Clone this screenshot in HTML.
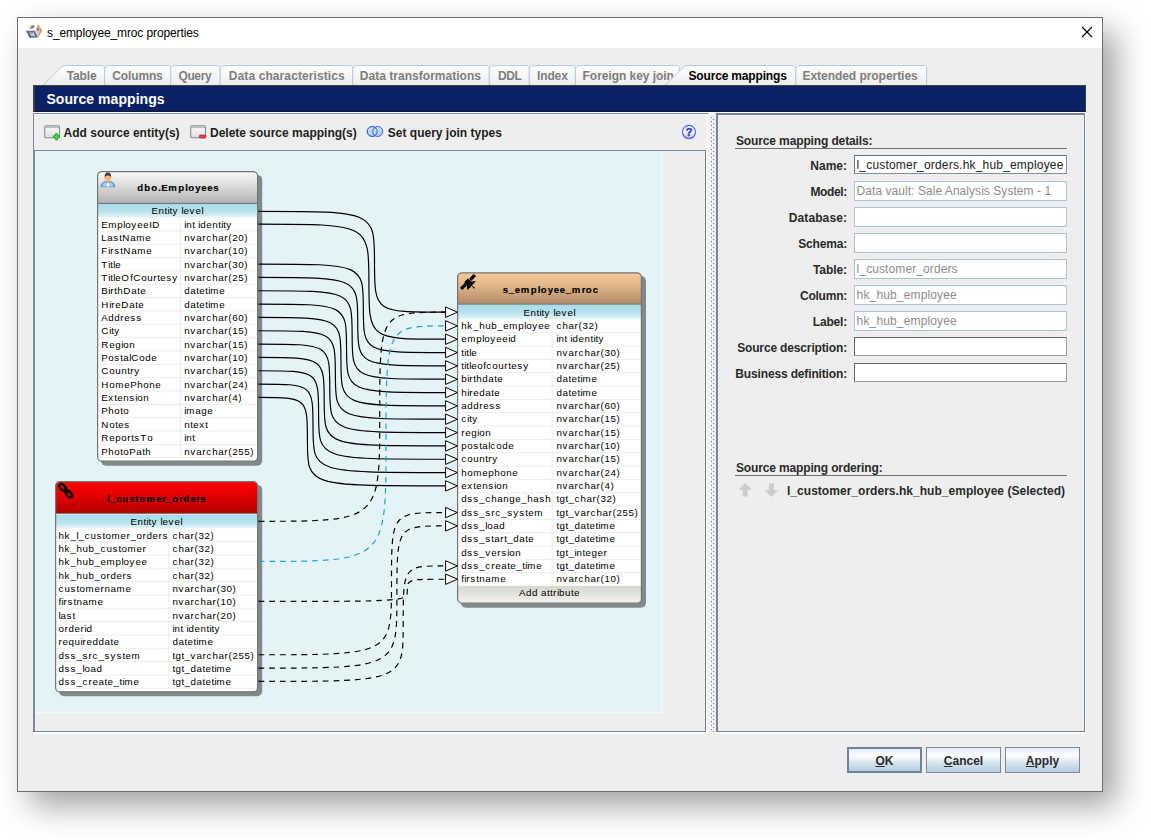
<!DOCTYPE html>
<html><head><meta charset="utf-8"><title>s_employee_mroc properties</title>
<style>
*{box-sizing:border-box;margin:0;padding:0}
html,body{width:1151px;height:840px;overflow:hidden;background:#fff}
body{font-family:"Liberation Sans",sans-serif;font-size:12px;color:#222;position:relative}
.abs{position:absolute}
#win{position:absolute;left:17px;top:17px;width:1086px;height:775px;border:1px solid #6f6f6f;background:#eeeeee;
 box-shadow:13px 14px 30px 0 rgba(0,0,0,.37)}
#titlebar{position:absolute;left:18px;top:18px;width:1084px;height:30px;background:#fff}
#title{position:absolute;left:47px;top:26px;font-size:12px;line-height:14px;color:#000;letter-spacing:-.12px;white-space:nowrap}
.tab{position:absolute;top:65px;height:21px;font-weight:bold;font-size:12px;line-height:14px;color:#7d7d7d;white-space:nowrap}
.tab span{position:absolute;top:4px}
#bluebar{position:absolute;left:33px;top:85px;width:1053px;height:27px;background:#0a2265;border-top:1.6px solid #44423f;border-bottom:1px solid #16182c;border-left:2px solid #3f3e3c;border-right:1px solid #3a3a44}
#bluebar span{position:absolute;left:11.4px;top:5.4px;font-size:14px;line-height:16px;font-weight:bold;color:#fff;letter-spacing:.05px;white-space:nowrap}
.tb{position:absolute;top:126px;font-weight:bold;font-size:12px;line-height:14px;color:#1e1e1e;white-space:nowrap}
.lbl{position:absolute;font-weight:bold;font-size:12px;line-height:14px;color:#2a2a2a;white-space:nowrap;text-align:right;width:120px;left:727px}
.inp{position:absolute;left:854px;width:213px;height:20px;background:#fff;border:1px solid #aac4e0;font-size:12px;line-height:14px;padding:2px 0 0 1.6px;color:#8c8c8c;white-space:nowrap;overflow:hidden}
.btn{position:absolute;top:747px;height:26px;border:1px solid #7b8a9b;background:linear-gradient(#e4ecf5 0%,#fdfeff 28%,#f4f8fb 40%,#d6e3f0 62%,#b7cde3 100%);font-weight:bold;font-size:12px;line-height:14px;text-align:center;padding-top:6px;color:#2b2b2b}
.btn u{text-decoration:underline}
</style></head><body>
<div id="win"></div>
<div id="titlebar"></div>
<svg class="abs" style="left:25px;top:23px" width="18" height="16" viewBox="0 0 18 16">
<defs><linearGradient id="dg" x1="0" y1="0" x2="1" y2="0"><stop offset="0" stop-color="#f6d9bd"/><stop offset="0.55" stop-color="#eaa56a"/><stop offset="1" stop-color="#dc7f37"/></linearGradient>
<linearGradient id="pg" x1="0" y1="0" x2="0" y2="1"><stop offset="0" stop-color="#5573b4"/><stop offset="1" stop-color="#3f5b9a"/></linearGradient></defs>
<path d="M0.9,7.7 L10,7.7 L12.8,14.6 L4.5,14.8 Z" fill="url(#pg)"/>
<path d="M4.2,9.4 L8.8,9.4 L10.4,13.2 L6,13.2 Z" fill="#bccbeb"/>
<path d="M4.4,9.2 L7.9,9.2 L6.3,12.1 Z" fill="#e58a3a"/>
<path d="M13,1 L17.3,7.6 L13,14.7 L9.7,7.5 Z" fill="url(#dg)"/>
<path d="M13,3.9 L15.2,7.6 L13,12 L11.2,7.5 Z" fill="#f4dcc6"/>
<path d="M13,4.2 L14.6,7.5 L11.5,7.5 Z" fill="#4a69aa"/>
<path d="M11.6,7.9 L14.5,7.9 L13.1,11.5 Z" fill="#b4c2e6"/>
<path d="M6.3,2.6 L10,2.6 L8.5,5 L5.2,5 Z" fill="#5573b4"/>
<path d="M3.9,5.9 L6.2,3.1 L7.7,5.9 Z" fill="#e58a3a"/>
</svg>
<div id="title">s_employee_mroc properties</div>
<svg class="abs" style="left:1080px;top:25px" width="14" height="14" viewBox="0 0 14 14"><path d="M2,2 L12,12 M12,2 L2,12" stroke="#000" stroke-width="1.1" fill="none"/></svg>
<svg class="abs" style="left:34px;top:60px" width="900" height="27" viewBox="0 0 900 27"><defs><linearGradient id="tg" x1="0" y1="0" x2="0" y2="1"><stop offset="0" stop-color="#ffffff"/><stop offset="0.25" stop-color="#fbfbfb"/><stop offset="1" stop-color="#ececec"/></linearGradient></defs>
<path fill="url(#tg)" stroke="#aecbe8" stroke-width="1" d="M8.60,25.60 L27.00,7.60 Q28.60,5.50 31.50,5.50 L68.40,5.50 Q70.60,5.90 70.60,8.70 L70.60,25.60"/>
<path fill="url(#tg)" stroke="#aecbe8" stroke-width="1" d="M70.60,25.60 L70.60,8.90 Q71.20,5.70 76.00,5.50 L134.60,5.50 Q136.80,5.90 136.80,8.70 L136.80,25.60"/>
<path fill="url(#tg)" stroke="#aecbe8" stroke-width="1" d="M136.80,25.60 L136.80,8.90 Q137.40,5.70 142.20,5.50 L184.00,5.50 Q186.20,5.90 186.20,8.70 L186.20,25.60"/>
<path fill="url(#tg)" stroke="#aecbe8" stroke-width="1" d="M186.20,25.60 L186.20,8.90 Q186.80,5.70 191.60,5.50 L316.50,5.50 Q318.70,5.90 318.70,8.70 L318.70,25.60"/>
<path fill="url(#tg)" stroke="#aecbe8" stroke-width="1" d="M318.70,25.60 L318.70,8.90 Q319.30,5.70 324.10,5.50 L453.10,5.50 Q455.30,5.90 455.30,8.70 L455.30,25.60"/>
<path fill="url(#tg)" stroke="#aecbe8" stroke-width="1" d="M455.30,25.60 L455.30,8.90 Q455.90,5.70 460.70,5.50 L493.10,5.50 Q495.30,5.90 495.30,8.70 L495.30,25.60"/>
<path fill="url(#tg)" stroke="#aecbe8" stroke-width="1" d="M495.30,25.60 L495.30,8.90 Q495.90,5.70 500.70,5.50 L539.20,5.50 Q541.40,5.90 541.40,8.70 L541.40,25.60"/>
<path fill="url(#tg)" stroke="#aecbe8" stroke-width="1" d="M541.40,25.60 L541.40,8.90 Q542.00,5.70 546.80,5.50 L643.40,5.50 Q645.60,5.90 645.60,8.70 L645.60,25.60"/>
<path fill="url(#tg)" stroke="#aecbe8" stroke-width="1" d="M761.70,25.60 L761.70,8.90 Q762.30,5.70 767.10,5.50 L890.40,5.50 Q892.60,5.90 892.60,8.70 L892.60,25.60"/>
<g font-family="Liberation Sans, sans-serif" font-weight="bold" font-size="12px" fill="#7e7e7e">
<text x="32.70" y="19.50" style="letter-spacing:-0.138px">Table</text>
<text x="78.30" y="19.50" style="letter-spacing:-0.139px">Columns</text>
<text x="144.40" y="19.50" style="letter-spacing:-0.345px">Query</text>
<text x="194.80" y="19.50" style="letter-spacing:0.097px">Data characteristics</text>
<text x="325.80" y="19.50" style="letter-spacing:0.027px">Data transformations</text>
<text x="463.90" y="19.50" style="letter-spacing:-0.33px">DDL</text>
<text x="503.00" y="19.50" style="letter-spacing:-0.135px">Index</text>
<text x="548.60" y="19.50" style="letter-spacing:-0.05px">Foreign key join</text>
<text x="768.50" y="19.50" style="letter-spacing:-0.046px">Extended properties</text>
</g>
<path fill="url(#tg)" stroke="#aecbe8" stroke-width="1" d="M630.60,25.60 L649.00,7.60 Q650.60,5.50 653.50,5.50 L759.50,5.50 Q761.70,5.90 761.70,8.70 L761.70,25.60"/>
<text x="654.50" y="19.50" font-family="Liberation Sans, sans-serif" font-weight="bold" font-size="12px" fill="#000" style="letter-spacing:-0.17px">Source mappings</text>
</svg>
<div id="bluebar"><span>Source mappings</span></div>
<!-- left panel frame -->
<div class="abs" style="left:33px;top:112px;width:1053px;height:1px;background:#fdfdfd"></div>
<div class="abs" style="left:33px;top:113px;width:675px;height:1px;background:#7a8b9f"></div>
<div class="abs" style="left:33px;top:113px;width:1px;height:619px;background:#7a8b9f"></div>
<div class="abs" style="left:34px;top:114px;width:672px;height:1px;background:#f6f6f6"></div>
<div class="abs" style="left:34px;top:150px;width:672px;height:1px;background:#7a8b9f"></div>
<div class="abs" style="left:34px;top:151px;width:1px;height:581px;background:#7a8b9f"></div>
<div class="abs" style="left:705px;top:151px;width:1px;height:581px;background:#72849b"></div>
<div class="abs" style="left:706px;top:114px;width:2px;height:620px;background:#fafafa"></div>
<div class="abs" style="left:33px;top:731px;width:673px;height:1px;background:#72849b"></div>
<div class="abs" style="left:33px;top:732px;width:675px;height:1.5px;background:#fcfcfc"></div>
<!-- toolbar -->
<svg class="abs" style="left:43px;top:124px" width="20" height="17" viewBox="0 0 20 17">
<defs><linearGradient id="wg" x1="0" y1="0" x2="0" y2="1"><stop offset="0" stop-color="#ffffff"/><stop offset="1" stop-color="#dcdcdc"/></linearGradient></defs>
<rect x="1.7" y="1.7" width="14.8" height="12" rx="1.3" fill="url(#wg)" stroke="#8c8c8c" stroke-width="1.1"/>
<rect x="2.3" y="2.2" width="13.6" height="1.9" fill="#b9bcc6"/>
<path d="M13.5,10.4 V15 M11.2,12.7 H15.8" stroke="#1d9a1d" stroke-width="2.9" stroke-linecap="round"/>
<path d="M13.5,10.5 V14.9 M11.3,12.7 H15.7" stroke="#3fe03f" stroke-width="1.5" stroke-linecap="round"/>
</svg>
<div class="tb" style="left:63.6px">Add source entity(s)</div>
<svg class="abs" style="left:189px;top:124px" width="20" height="17" viewBox="0 0 20 17">
<rect x="1.7" y="1.7" width="14.8" height="12" rx="1.3" fill="url(#wg)" stroke="#8c8c8c" stroke-width="1.1"/>
<rect x="2.3" y="2.2" width="13.6" height="1.9" fill="#b9bcc6"/>
<rect x="10.3" y="11.1" width="6.6" height="2.9" rx="0.9" fill="#e8404a" stroke="#b81822" stroke-width="0.7"/>
</svg>
<div class="tb" style="left:210px">Delete source mapping(s)</div>
<svg class="abs" style="left:365px;top:124px" width="20" height="16" viewBox="0 0 20 16">
<defs><linearGradient id="vg" x1="0" y1="0" x2="1" y2="1"><stop offset="0" stop-color="#dfe9fa"/><stop offset="1" stop-color="#9db9ea"/></linearGradient></defs>
<circle cx="7.2" cy="7.5" r="5" fill="url(#vg)" stroke="#3a69d8" stroke-width="1"/>
<circle cx="12.8" cy="7.5" r="5" fill="url(#vg)" fill-opacity="0.85" stroke="#3a69d8" stroke-width="1"/>
<circle cx="7.2" cy="7.5" r="5" fill="none" stroke="#3a69d8" stroke-width="1"/>
</svg>
<div class="tb" style="left:387.8px">Set query join types</div>
<svg class="abs" style="left:680px;top:123px" width="18" height="18" viewBox="0 0 18 18">
<defs><linearGradient id="hg" x1="0" y1="0" x2="0" y2="1"><stop offset="0" stop-color="#ffffff"/><stop offset="0.5" stop-color="#f4f4f4"/><stop offset="1" stop-color="#d2d2d2"/></linearGradient></defs>
<ellipse cx="9" cy="15.4" rx="5.2" ry="1.2" fill="#cfcfcf"/>
<circle cx="9" cy="8.9" r="6.5" fill="url(#hg)" stroke="#3f5ff0" stroke-width="1.1"/>
<text x="9" y="12.9" text-anchor="middle" font-family="Liberation Sans, sans-serif" font-weight="bold" font-size="11.5px" fill="#2a40d4" stroke="#2a40d4" stroke-width=".35">?</text>
</svg>
<!-- splitter dots -->
<svg class="abs" style="left:708px;top:114px" width="8" height="620" viewBox="0 0 8 620">
<defs><pattern id="dots" x="0" y="0" width="8" height="4" patternUnits="userSpaceOnUse">
<rect x="2.9" y="3" width="1.1" height="1.1" fill="#6f8096"/><rect x="5" y="1" width="1.1" height="1.1" fill="#6f8096"/>
</pattern></defs>
<rect x="0" y="0" width="8" height="620" fill="#f1f1f1"/>
<rect x="0" y="2" width="8" height="616" fill="url(#dots)"/>
</svg>

<svg id="cv" width="672" height="581" viewBox="0 0 672 581" style="position:absolute;left:35px;top:151px;overflow:hidden">
<defs>
<linearGradient id="gEmp" x1="0" y1="0" x2="0" y2="1"><stop offset="0" stop-color="#fdfdfd"/><stop offset="0.35" stop-color="#e3e3e3"/><stop offset="1" stop-color="#b2b2b2"/></linearGradient>
<linearGradient id="gLco" x1="0" y1="0" x2="0" y2="1"><stop offset="0" stop-color="#ff0303"/><stop offset="0.4" stop-color="#e80000"/><stop offset="1" stop-color="#ae0000"/></linearGradient>
<linearGradient id="gSem" x1="0" y1="0" x2="0" y2="1"><stop offset="0" stop-color="#f9c998"/><stop offset="0.4" stop-color="#e2b78b"/><stop offset="1" stop-color="#ae8a67"/></linearGradient>
<linearGradient id="entlvl" x1="0" y1="0" x2="0" y2="1"><stop offset="0" stop-color="#a5dcea"/><stop offset="0.55" stop-color="#b9e3ee"/><stop offset="1" stop-color="#e6f5f9"/></linearGradient>
<linearGradient id="addattr" x1="0" y1="0" x2="0" y2="1"><stop offset="0" stop-color="#d6d6d0"/><stop offset="0.5" stop-color="#e6e6e1"/><stop offset="1" stop-color="#f6f6f3"/></linearGradient>
</defs>
<style>
#cv text{font-family:"Liberation Sans",sans-serif;font-size:9.8px;fill:#000;stroke:#000;stroke-width:.03px}
#cv .ttl{font-weight:bold;font-size:9.6px;stroke-width:.15px}
.ln{fill:none;stroke:#000;stroke-width:1.18}
.dl{fill:none;stroke:#000;stroke-width:1.18;stroke-dasharray:5.8 4.9}
.bl{fill:none;stroke:#1ea4cf;stroke-width:1.18;stroke-dasharray:5.8 4.9}
.ar{fill:#fff;stroke:#000;stroke-width:1.0;stroke-linejoin:miter}
</style>
<rect x="0" y="0" width="627.4" height="562.2" fill="#f7fbfc"/>
<rect x="0" y="0" width="626.5" height="561.3" fill="#e4f3f8"/>
<rect x="66.00" y="23.90" width="161.20" height="290.73" rx="5" ry="5" fill="#81898b"/>
<clipPath id="cg97"><rect x="62.60" y="20.60" width="160.00" height="289.53" rx="4.2" ry="4.2"/></clipPath>
<rect x="62.60" y="20.60" width="160.00" height="289.53" rx="4.4" ry="4.4" fill="#fff"/>
<g clip-path="url(#cg97)">
<rect x="62.00" y="20.00" width="161.20" height="32.60" fill="url(#gEmp)"/>
<rect x="62.00" y="51.90" width="161.20" height="1.1" fill="#767676"/>
<rect x="62.00" y="53.00" width="161.20" height="13.60" fill="url(#entlvl)"/>
<rect x="62.00" y="79.44" width="161.20" height="1" fill="#ededed"/>
<rect x="62.00" y="92.77" width="161.20" height="1" fill="#ededed"/>
<rect x="62.00" y="106.11" width="161.20" height="1" fill="#ededed"/>
<rect x="62.00" y="119.44" width="161.20" height="1" fill="#ededed"/>
<rect x="62.00" y="132.77" width="161.20" height="1" fill="#ededed"/>
<rect x="62.00" y="146.11" width="161.20" height="1" fill="#ededed"/>
<rect x="62.00" y="159.44" width="161.20" height="1" fill="#ededed"/>
<rect x="62.00" y="172.78" width="161.20" height="1" fill="#ededed"/>
<rect x="62.00" y="186.12" width="161.20" height="1" fill="#ededed"/>
<rect x="62.00" y="199.45" width="161.20" height="1" fill="#ededed"/>
<rect x="62.00" y="212.78" width="161.20" height="1" fill="#ededed"/>
<rect x="62.00" y="226.12" width="161.20" height="1" fill="#ededed"/>
<rect x="62.00" y="239.46" width="161.20" height="1" fill="#ededed"/>
<rect x="62.00" y="252.79" width="161.20" height="1" fill="#ededed"/>
<rect x="62.00" y="266.12" width="161.20" height="1" fill="#ededed"/>
<rect x="62.00" y="279.46" width="161.20" height="1" fill="#ededed"/>
<rect x="62.00" y="292.80" width="161.20" height="1" fill="#ededed"/>
<rect x="62.00" y="306.13" width="161.20" height="1" fill="#ededed"/>
<rect x="145.00" y="66.60" width="1" height="240.03" fill="#ededed"/>
</g>
<rect x="62.60" y="20.60" width="160.00" height="289.53" rx="4.4" ry="4.4" fill="none" stroke="#747474" stroke-width="1.2"/>
<g transform="translate(65.60,21.30)">
<path d="M0.3,14.6 C0.3,11.2 2.6,9.6 5.2,9 L7.3,11 L9.4,9 C12,9.6 14.3,11.2 14.3,14.6 Z" fill="#6aa6de" stroke="#4a86c4" stroke-width="0.6"/>
<path d="M2,14.2 C2,12 3.4,10.6 5.1,10 L6.6,12.6 L6.2,14.2 Z" fill="#a9d0f3"/>
<path d="M12.6,14.2 C12.6,12 11.2,10.6 9.5,10 L8,12.6 L8.4,14.2 Z" fill="#a9d0f3"/>
<path d="M6.2,10.6 L8.4,10.6 L8.1,14.4 L6.5,14.4 Z" fill="#ffffff"/>
<ellipse cx="7.3" cy="5.5" rx="2.9" ry="3.7" fill="#f2b878"/><ellipse cx="4.5" cy="5.7" rx="0.7" ry="1" fill="#e8a868"/><ellipse cx="10.1" cy="5.7" rx="0.7" ry="1" fill="#e8a868"/>
<path d="M5.6,8.6 L9,8.6 L8.6,10.4 L7.3,11.2 L6,10.4 Z" fill="#e8a868"/>
<path d="M4.2,5.2 C3.6,1.8 5.2,0.1 7.3,0.1 C9.4,0.1 11,1.8 10.4,5.2 C10,3.8 9.2,3.1 7.3,3.1 C5.4,3.1 4.6,3.8 4.2,5.2 Z" fill="#4a3a38"/>
</g>
<text x="102.2 109.2 116.2 123.2 126.2 133.2 143.2 150.2 153.2 160.2 166.2 172.2 178.2" y="39.80" class="ttl" fill="#111">dbo.Employees</text>
<text x="116.6 123.6 129.6 132.6 134.6 137.6 143.6 146.6 148.6 154.6 160.6 166.6" y="63.00" class="rt">Entity level</text>
<text x="66.3 73.3 82.3 88.3 90.3 96.3 102.3 108.3 114.3 117.3" y="76.80" class="rn">EmployeeID</text>
<text x="149.3 151.3 157.3 160.3 163.3 165.3 171.3 177.3 183.3 186.3 188.3 191.3" y="76.80" class="rt">int identity</text>
<text x="66.3 72.3 78.3 84.3 87.3 95.3 101.3 110.3" y="90.13" class="rn">LastName</text>
<text x="149.3 155.3 161.3 167.3 171.3 177.3 183.3 189.3 193.3 197.3 203.3 209.3" y="90.13" class="rt">nvarchar(20)</text>
<text x="66.3 73.3 75.3 79.3 85.3 88.3 96.3 102.3 111.3" y="103.47" class="rn">FirstName</text>
<text x="149.3 155.3 161.3 167.3 171.3 177.3 183.3 189.3 193.3 197.3 203.3 209.3" y="103.47" class="rt">nvarchar(10)</text>
<text x="66.3 73.3 75.3 78.3 80.3" y="116.81" class="rn">Title</text>
<text x="149.3 155.3 161.3 167.3 171.3 177.3 183.3 189.3 193.3 197.3 203.3 209.3" y="116.81" class="rt">nvarchar(30)</text>
<text x="66.3 73.3 75.3 78.3 80.3 86.3 95.3 98.3 106.3 112.3 118.3 122.3 125.3 131.3 137.3" y="130.14" class="rn">TitleOfCourtesy</text>
<text x="149.3 155.3 161.3 167.3 171.3 177.3 183.3 189.3 193.3 197.3 203.3 209.3" y="130.14" class="rt">nvarchar(25)</text>
<text x="66.3 73.3 75.3 79.3 82.3 88.3 96.3 102.3 105.3" y="143.47" class="rn">BirthDate</text>
<text x="149.3 155.3 161.3 164.3 170.3 173.3 175.3 184.3" y="143.47" class="rt">datetime</text>
<text x="66.3 74.3 76.3 80.3 86.3 94.3 100.3 103.3" y="156.81" class="rn">HireDate</text>
<text x="149.3 155.3 161.3 164.3 170.3 173.3 175.3 184.3" y="156.81" class="rt">datetime</text>
<text x="66.3 73.3 79.3 85.3 89.3 95.3 101.3" y="170.14" class="rn">Address</text>
<text x="149.3 155.3 161.3 167.3 171.3 177.3 183.3 189.3 193.3 197.3 203.3 209.3" y="170.14" class="rt">nvarchar(60)</text>
<text x="66.3 74.3 76.3 79.3" y="183.48" class="rn">City</text>
<text x="149.3 155.3 161.3 167.3 171.3 177.3 183.3 189.3 193.3 197.3 203.3 209.3" y="183.48" class="rt">nvarchar(15)</text>
<text x="66.3 74.3 80.3 86.3 88.3 94.3" y="196.81" class="rn">Region</text>
<text x="149.3 155.3 161.3 167.3 171.3 177.3 183.3 189.3 193.3 197.3 203.3 209.3" y="196.81" class="rt">nvarchar(15)</text>
<text x="66.3 73.3 79.3 85.3 88.3 94.3 96.3 104.3 110.3 116.3" y="210.15" class="rn">PostalCode</text>
<text x="149.3 155.3 161.3 167.3 171.3 177.3 183.3 189.3 193.3 197.3 203.3 209.3" y="210.15" class="rt">nvarchar(10)</text>
<text x="66.3 74.3 80.3 86.3 92.3 95.3 99.3" y="223.48" class="rn">Country</text>
<text x="149.3 155.3 161.3 167.3 171.3 177.3 183.3 189.3 193.3 197.3 203.3 209.3" y="223.48" class="rt">nvarchar(15)</text>
<text x="66.3 74.3 80.3 89.3 95.3 102.3 108.3 114.3 120.3" y="236.82" class="rn">HomePhone</text>
<text x="149.3 155.3 161.3 167.3 171.3 177.3 183.3 189.3 193.3 197.3 203.3 209.3" y="236.82" class="rt">nvarchar(24)</text>
<text x="66.3 73.3 79.3 82.3 88.3 94.3 100.3 102.3 108.3" y="250.16" class="rn">Extension</text>
<text x="149.3 155.3 161.3 167.3 171.3 177.3 183.3 189.3 193.3 197.3 203.3" y="250.16" class="rt">nvarchar(4)</text>
<text x="66.3 73.3 79.3 85.3 88.3" y="263.49" class="rn">Photo</text>
<text x="149.3 151.3 160.3 166.3 172.3" y="263.49" class="rt">image</text>
<text x="66.3 74.3 80.3 83.3 89.3" y="276.82" class="rn">Notes</text>
<text x="149.3 155.3 158.3 164.3 170.3" y="276.82" class="rt">ntext</text>
<text x="66.3 74.3 80.3 86.3 92.3 96.3 99.3 105.3 112.3" y="290.16" class="rn">ReportsTo</text>
<text x="149.3 151.3 157.3" y="290.16" class="rt">int</text>
<text x="66.3 73.3 79.3 85.3 88.3 94.3 101.3 107.3 110.3" y="303.50" class="rn">PhotoPath</text>
<text x="149.3 155.3 161.3 167.3 171.3 177.3 183.3 189.3 193.3 197.3 203.3 209.3 215.3" y="303.50" class="rt">nvarchar(255)</text>
<rect x="24.00" y="333.90" width="203.20" height="211.42" rx="5" ry="5" fill="#81898b"/>
<clipPath id="cg55"><rect x="20.60" y="330.60" width="202.00" height="210.22" rx="4.2" ry="4.2"/></clipPath>
<rect x="20.60" y="330.60" width="202.00" height="210.22" rx="4.4" ry="4.4" fill="#fff"/>
<g clip-path="url(#cg55)">
<rect x="20.00" y="330.00" width="203.20" height="32.80" fill="url(#gLco)"/>
<rect x="20.00" y="362.10" width="203.20" height="1.1" fill="#767676"/>
<rect x="20.00" y="364.00" width="203.20" height="13.30" fill="url(#entlvl)"/>
<rect x="20.00" y="390.13" width="203.20" height="1" fill="#ededed"/>
<rect x="20.00" y="403.47" width="203.20" height="1" fill="#ededed"/>
<rect x="20.00" y="416.80" width="203.20" height="1" fill="#ededed"/>
<rect x="20.00" y="430.14" width="203.20" height="1" fill="#ededed"/>
<rect x="20.00" y="443.47" width="203.20" height="1" fill="#ededed"/>
<rect x="20.00" y="456.81" width="203.20" height="1" fill="#ededed"/>
<rect x="20.00" y="470.14" width="203.20" height="1" fill="#ededed"/>
<rect x="20.00" y="483.48" width="203.20" height="1" fill="#ededed"/>
<rect x="20.00" y="496.81" width="203.20" height="1" fill="#ededed"/>
<rect x="20.00" y="510.15" width="203.20" height="1" fill="#ededed"/>
<rect x="20.00" y="523.48" width="203.20" height="1" fill="#ededed"/>
<rect x="20.00" y="536.82" width="203.20" height="1" fill="#ededed"/>
<rect x="132.80" y="377.30" width="1" height="160.02" fill="#ededed"/>
</g>
<rect x="20.60" y="330.60" width="202.00" height="210.22" rx="4.4" ry="4.4" fill="none" stroke="#747474" stroke-width="1.2"/>
<g transform="translate(23.20,332.00)" fill="none" stroke="#000" stroke-width="2.35" stroke-linecap="round">
<g transform="rotate(45 4.4 4.4)"><rect x="0.55" y="2.3" width="7.7" height="4.2" rx="2.1"/></g>
<g transform="rotate(45 10.8 11.0)"><rect x="6.95" y="8.9" width="7.7" height="4.2" rx="2.1"/></g>
<path d="M6.3,6.5 L9,9.1" stroke-width="2.3"/>
</g>
<text x="72.3 75.3 81.3 87.3 94.3 100.3 104.3 111.3 121.3 127.3 131.3 137.3 144.3 148.3 155.3 161.3 165.3" y="351.00" class="ttl" fill="#2a0000">l_customer_orders</text>
<text x="95.6 102.6 108.6 111.6 113.6 116.6 122.6 125.6 127.6 133.6 139.6 145.6" y="373.70" class="rt">Entity level</text>
<text x="23.6 29.6 35.6 41.6 43.6 49.6 55.6 61.6 67.6 70.6 76.6 85.6 91.6 95.6 101.6 107.6 111.6 117.6 123.6 127.6" y="387.50" class="rn">hk_l_customer_orders</text>
<text x="137.4 143.4 149.4 155.4 159.4 163.4 169.4 175.4" y="387.50" class="rt">char(32)</text>
<text x="23.6 29.6 35.6 41.6 47.6 53.6 59.6 65.6 71.6 77.6 83.6 86.6 92.6 101.6 107.6" y="400.84" class="rn">hk_hub_customer</text>
<text x="137.4 143.4 149.4 155.4 159.4 163.4 169.4 175.4" y="400.84" class="rt">char(32)</text>
<text x="23.6 29.6 35.6 41.6 47.6 53.6 59.6 65.6 71.6 80.6 86.6 88.6 94.6 100.6 106.6" y="414.17" class="rn">hk_hub_employee</text>
<text x="137.4 143.4 149.4 155.4 159.4 163.4 169.4 175.4" y="414.17" class="rt">char(32)</text>
<text x="23.6 29.6 35.6 41.6 47.6 53.6 59.6 65.6 71.6 75.6 81.6 87.6 91.6" y="427.50" class="rn">hk_hub_orders</text>
<text x="137.4 143.4 149.4 155.4 159.4 163.4 169.4 175.4" y="427.50" class="rt">char(32)</text>
<text x="23.6 29.6 35.6 41.6 44.6 50.6 59.6 65.6 69.6 75.6 81.6 90.6" y="440.84" class="rn">customername</text>
<text x="137.4 143.4 149.4 155.4 159.4 165.4 171.4 177.4 181.4 185.4 191.4 197.4" y="440.84" class="rt">nvarchar(30)</text>
<text x="23.6 26.6 28.6 32.6 38.6 41.6 47.6 53.6 62.6" y="454.17" class="rn">firstname</text>
<text x="137.4 143.4 149.4 155.4 159.4 165.4 171.4 177.4 181.4 185.4 191.4 197.4" y="454.17" class="rt">nvarchar(10)</text>
<text x="23.6 25.6 31.6 37.6" y="467.51" class="rn">last</text>
<text x="137.4 143.4 149.4 155.4 159.4 165.4 171.4 177.4 181.4 185.4 191.4 197.4" y="467.51" class="rt">nvarchar(20)</text>
<text x="23.6 29.6 33.6 39.6 45.6 49.6 51.6" y="480.85" class="rn">orderid</text>
<text x="137.4 139.4 145.4 148.4 151.4 153.4 159.4 165.4 171.4 174.4 176.4 179.4" y="480.85" class="rt">int identity</text>
<text x="23.6 27.6 33.6 39.6 45.6 47.6 51.6 57.6 63.6 69.6 75.6 78.6" y="494.18" class="rn">requireddate</text>
<text x="137.4 143.4 149.4 152.4 158.4 161.4 163.4 172.4" y="494.18" class="rt">datetime</text>
<text x="23.6 29.6 35.6 41.6 47.6 53.6 57.6 63.6 69.6 75.6 81.6 87.6 90.6 96.6" y="507.51" class="rn">dss_src_system</text>
<text x="137.4 140.4 146.4 149.4 155.4 161.4 167.4 171.4 177.4 183.4 189.4 193.4 197.4 203.4 209.4 215.4" y="507.51" class="rt">tgt_varchar(255)</text>
<text x="23.6 29.6 35.6 41.6 47.6 49.6 55.6 61.6" y="520.85" class="rn">dss_load</text>
<text x="137.4 140.4 146.4 149.4 155.4 161.4 167.4 170.4 176.4 179.4 181.4 190.4" y="520.85" class="rt">tgt_datetime</text>
<text x="23.6 29.6 35.6 41.6 47.6 53.6 57.6 63.6 69.6 72.6 78.6 84.6 87.6 89.6 98.6" y="534.18" class="rn">dss_create_time</text>
<text x="137.4 140.4 146.4 149.4 155.4 161.4 167.4 170.4 176.4 179.4 181.4 190.4" y="534.18" class="rt">tgt_datetime</text>
<rect x="426.00" y="125.10" width="185.00" height="331.60" rx="5" ry="5" fill="#81898b"/>
<clipPath id="cg457"><rect x="422.60" y="121.80" width="183.80" height="330.40" rx="4.2" ry="4.2"/></clipPath>
<rect x="422.60" y="121.80" width="183.80" height="330.40" rx="4.4" ry="4.4" fill="#fff"/>
<g clip-path="url(#cg457)">
<rect x="422.00" y="121.20" width="185.00" height="32.20" fill="url(#gSem)"/>
<rect x="422.00" y="152.70" width="185.00" height="1.1" fill="#767676"/>
<rect x="422.00" y="153.80" width="185.00" height="14.60" fill="url(#entlvl)"/>
<rect x="422.00" y="181.23" width="185.00" height="1" fill="#ededed"/>
<rect x="422.00" y="194.57" width="185.00" height="1" fill="#ededed"/>
<rect x="422.00" y="207.90" width="185.00" height="1" fill="#ededed"/>
<rect x="422.00" y="221.24" width="185.00" height="1" fill="#ededed"/>
<rect x="422.00" y="234.57" width="185.00" height="1" fill="#ededed"/>
<rect x="422.00" y="247.91" width="185.00" height="1" fill="#ededed"/>
<rect x="422.00" y="261.25" width="185.00" height="1" fill="#ededed"/>
<rect x="422.00" y="274.58" width="185.00" height="1" fill="#ededed"/>
<rect x="422.00" y="287.91" width="185.00" height="1" fill="#ededed"/>
<rect x="422.00" y="301.25" width="185.00" height="1" fill="#ededed"/>
<rect x="422.00" y="314.58" width="185.00" height="1" fill="#ededed"/>
<rect x="422.00" y="327.92" width="185.00" height="1" fill="#ededed"/>
<rect x="422.00" y="341.25" width="185.00" height="1" fill="#ededed"/>
<rect x="422.00" y="354.59" width="185.00" height="1" fill="#ededed"/>
<rect x="422.00" y="367.92" width="185.00" height="1" fill="#ededed"/>
<rect x="422.00" y="381.26" width="185.00" height="1" fill="#ededed"/>
<rect x="422.00" y="394.60" width="185.00" height="1" fill="#ededed"/>
<rect x="422.00" y="407.93" width="185.00" height="1" fill="#ededed"/>
<rect x="422.00" y="421.26" width="185.00" height="1" fill="#ededed"/>
<rect x="422.00" y="434.60" width="185.00" height="1" fill="#ededed"/>
<rect x="516.70" y="168.40" width="1" height="266.70" fill="#ededed"/>
<rect x="422.00" y="435.10" width="185.00" height="18.60" fill="url(#addattr)"/>
</g>
<rect x="422.60" y="121.80" width="183.80" height="330.40" rx="4.4" ry="4.4" fill="none" stroke="#747474" stroke-width="1.2"/>
<g transform="translate(425.00,123.00)" fill="#000" stroke="none">
<g transform="rotate(-45 8 8)">
<rect x="-1.7" y="6.4" width="7" height="3.2"/>
<rect x="11.1" y="6.4" width="6.6" height="3.2"/>
<rect x="5.2" y="5.3" width="5.4" height="5.4" rx="0.9"/>
</g>
<path d="M8.6,9.6 L10.4,7.7 L15.9,7 L12,11.4 L7.6,15.9 L6.8,12.4 Z"/>
<path d="M11.6,11.4 L13.9,13.8" stroke="#000" stroke-width="1" stroke-linecap="round"/>
<circle cx="13.9" cy="13.8" r="0.7"/>
</g>
<text x="467.7 473.7 479.7 485.7 495.7 502.7 505.7 512.7 518.7 524.7 530.7 536.7 546.7 550.7 557.7" y="141.70" class="ttl" fill="#111">s_employee_mroc</text>
<text x="488.5 495.5 501.5 504.5 506.5 509.5 515.5 518.5 520.5 526.5 532.5 538.5" y="164.80" class="rt">Entity level</text>
<text x="426.3 432.3 438.3 444.3 450.3 456.3 462.3 468.3 474.3 483.3 489.3 491.3 497.3 503.3 509.3" y="177.90" class="rn">hk_hub_employee</text>
<text x="521.5 527.5 533.5 539.5 543.5 547.5 553.5 559.5" y="177.90" class="rt">char(32)</text>
<text x="426.3 432.3 441.3 447.3 449.3 455.3 461.3 467.3 473.3 475.3" y="191.23" class="rn">employeeid</text>
<text x="521.5 523.5 529.5 532.5 535.5 537.5 543.5 549.5 555.5 558.5 560.5 563.5" y="191.23" class="rt">int identity</text>
<text x="426.3 429.3 431.3 434.3 436.3" y="204.57" class="rn">title</text>
<text x="521.5 527.5 533.5 539.5 543.5 549.5 555.5 561.5 565.5 569.5 575.5 581.5" y="204.57" class="rt">nvarchar(30)</text>
<text x="426.3 429.3 431.3 434.3 436.3 442.3 448.3 451.3 457.3 463.3 469.3 473.3 476.3 482.3 488.3" y="217.90" class="rn">titleofcourtesy</text>
<text x="521.5 527.5 533.5 539.5 543.5 549.5 555.5 561.5 565.5 569.5 575.5 581.5" y="217.90" class="rt">nvarchar(25)</text>
<text x="426.3 432.3 434.3 438.3 441.3 447.3 453.3 459.3 462.3" y="231.24" class="rn">birthdate</text>
<text x="521.5 527.5 533.5 536.5 542.5 545.5 547.5 556.5" y="231.24" class="rt">datetime</text>
<text x="426.3 432.3 434.3 438.3 444.3 450.3 456.3 459.3" y="244.57" class="rn">hiredate</text>
<text x="521.5 527.5 533.5 536.5 542.5 545.5 547.5 556.5" y="244.57" class="rt">datetime</text>
<text x="426.3 432.3 438.3 444.3 448.3 454.3 460.3" y="257.91" class="rn">address</text>
<text x="521.5 527.5 533.5 539.5 543.5 549.5 555.5 561.5 565.5 569.5 575.5 581.5" y="257.91" class="rt">nvarchar(60)</text>
<text x="426.3 432.3 434.3 437.3" y="271.25" class="rn">city</text>
<text x="521.5 527.5 533.5 539.5 543.5 549.5 555.5 561.5 565.5 569.5 575.5 581.5" y="271.25" class="rt">nvarchar(15)</text>
<text x="426.3 430.3 436.3 442.3 444.3 450.3" y="284.58" class="rn">region</text>
<text x="521.5 527.5 533.5 539.5 543.5 549.5 555.5 561.5 565.5 569.5 575.5 581.5" y="284.58" class="rt">nvarchar(15)</text>
<text x="426.3 432.3 438.3 444.3 447.3 453.3 455.3 461.3 467.3 473.3" y="297.91" class="rn">postalcode</text>
<text x="521.5 527.5 533.5 539.5 543.5 549.5 555.5 561.5 565.5 569.5 575.5 581.5" y="297.91" class="rt">nvarchar(10)</text>
<text x="426.3 432.3 438.3 444.3 450.3 453.3 457.3" y="311.25" class="rn">country</text>
<text x="521.5 527.5 533.5 539.5 543.5 549.5 555.5 561.5 565.5 569.5 575.5 581.5" y="311.25" class="rt">nvarchar(15)</text>
<text x="426.3 432.3 438.3 447.3 453.3 459.3 465.3 471.3 477.3" y="324.58" class="rn">homephone</text>
<text x="521.5 527.5 533.5 539.5 543.5 549.5 555.5 561.5 565.5 569.5 575.5 581.5" y="324.58" class="rt">nvarchar(24)</text>
<text x="426.3 432.3 438.3 441.3 447.3 453.3 459.3 461.3 467.3" y="337.92" class="rn">extension</text>
<text x="521.5 527.5 533.5 539.5 543.5 549.5 555.5 561.5 565.5 569.5 575.5" y="337.92" class="rt">nvarchar(4)</text>
<text x="426.3 432.3 438.3 444.3 450.3 456.3 462.3 468.3 474.3 480.3 486.3 492.3 498.3 504.3 510.3" y="351.25" class="rn">dss_change_hash</text>
<text x="521.5 524.5 530.5 533.5 539.5 545.5 551.5 557.5 561.5 565.5 571.5 577.5" y="351.25" class="rt">tgt_char(32)</text>
<text x="426.3 432.3 438.3 444.3 450.3 456.3 460.3 466.3 472.3 478.3 484.3 490.3 493.3 499.3" y="364.59" class="rn">dss_src_system</text>
<text x="521.5 524.5 530.5 533.5 539.5 545.5 551.5 555.5 561.5 567.5 573.5 577.5 581.5 587.5 593.5 599.5" y="364.59" class="rt">tgt_varchar(255)</text>
<text x="426.3 432.3 438.3 444.3 450.3 452.3 458.3 464.3" y="377.92" class="rn">dss_load</text>
<text x="521.5 524.5 530.5 533.5 539.5 545.5 551.5 554.5 560.5 563.5 565.5 574.5" y="377.92" class="rt">tgt_datetime</text>
<text x="426.3 432.3 438.3 444.3 450.3 456.3 459.3 465.3 469.3 472.3 478.3 484.3 490.3 493.3" y="391.26" class="rn">dss_start_date</text>
<text x="521.5 524.5 530.5 533.5 539.5 545.5 551.5 554.5 560.5 563.5 565.5 574.5" y="391.26" class="rt">tgt_datetime</text>
<text x="426.3 432.3 438.3 444.3 450.3 456.3 462.3 466.3 472.3 474.3 480.3" y="404.60" class="rn">dss_version</text>
<text x="521.5 524.5 530.5 533.5 539.5 541.5 547.5 550.5 556.5 562.5 568.5" y="404.60" class="rt">tgt_integer</text>
<text x="426.3 432.3 438.3 444.3 450.3 456.3 460.3 466.3 472.3 475.3 481.3 487.3 490.3 492.3 501.3" y="417.93" class="rn">dss_create_time</text>
<text x="521.5 524.5 530.5 533.5 539.5 545.5 551.5 554.5 560.5 563.5 565.5 574.5" y="417.93" class="rt">tgt_datetime</text>
<text x="426.3 429.3 431.3 435.3 441.3 444.3 450.3 456.3 465.3" y="431.26" class="rn">firstname</text>
<text x="521.5 527.5 533.5 539.5 543.5 549.5 555.5 561.5 565.5 569.5 575.5 581.5" y="431.26" class="rt">nvarchar(10)</text>
<text x="484 491 497 503 506 512 515 518 522 524 530 536 539" y="444.60" class="rt">Add attribute</text>
<path class="ln" d="M223.40,60.40 C339.50,60.40 339.50,60.40 339.50,110.80 C339.50,161.20 339.50,161.20 410.60,161.20"/>
<path class="ln" d="M223.40,73.07 C333.91,73.07 333.91,73.07 333.91,130.63 C333.91,188.20 333.91,188.20 410.60,188.20"/>
<path class="ln" d="M223.40,113.07 C328.32,113.07 328.32,113.07 328.32,157.31 C328.32,201.54 328.32,201.54 410.60,201.54"/>
<path class="ln" d="M223.40,126.41 C322.73,126.41 322.73,126.41 322.73,170.64 C322.73,214.87 322.73,214.87 410.60,214.87"/>
<path class="ln" d="M223.40,139.74 C317.14,139.74 317.14,139.74 317.14,183.98 C317.14,228.21 317.14,228.21 410.60,228.21"/>
<path class="ln" d="M223.40,153.08 C311.55,153.08 311.55,153.08 311.55,197.31 C311.55,241.54 311.55,241.54 410.60,241.54"/>
<path class="ln" d="M223.40,166.41 C305.96,166.41 305.96,166.41 305.96,210.64 C305.96,254.88 305.96,254.88 410.60,254.88"/>
<path class="ln" d="M223.40,179.75 C300.37,179.75 300.37,179.75 300.37,223.98 C300.37,268.21 300.37,268.21 410.60,268.21"/>
<path class="ln" d="M223.40,193.08 C294.78,193.08 294.78,193.08 294.78,237.32 C294.78,281.55 294.78,281.55 410.60,281.55"/>
<path class="ln" d="M223.40,206.42 C289.19,206.42 289.19,206.42 289.19,250.65 C289.19,294.88 289.19,294.88 410.60,294.88"/>
<path class="ln" d="M223.40,219.75 C283.60,219.75 283.60,219.75 283.60,263.99 C283.60,308.22 283.60,308.22 410.60,308.22"/>
<path class="ln" d="M223.40,233.09 C278.01,233.09 278.01,233.09 278.01,277.32 C278.01,321.55 278.01,321.55 410.60,321.55"/>
<path class="ln" d="M223.40,246.42 C272.42,246.42 272.42,246.42 272.42,290.66 C272.42,334.89 272.42,334.89 410.60,334.89"/>
<path class="dl" d="M223.40,370.30 C344.70,370.30 344.70,370.30 344.70,265.75 C344.70,161.20 344.70,161.20 410.60,161.20"/>
<path class="bl" d="M223.40,410.44 C351.00,410.44 351.00,410.44 351.00,292.65 C351.00,174.87 351.00,174.87 410.60,174.87"/>
<path class="dl" d="M223.40,503.78 C356.50,503.78 356.50,503.78 356.50,432.67 C356.50,361.56 356.50,361.56 410.60,361.56"/>
<path class="dl" d="M223.40,517.12 C361.90,517.12 361.90,517.12 361.90,446.00 C361.90,374.89 361.90,374.89 410.60,374.89"/>
<path class="dl" d="M223.40,530.45 C368.20,530.45 368.20,530.45 368.20,472.67 C368.20,414.90 368.20,414.90 410.60,414.90"/>
<path class="dl" d="M223.40,450.44 C372.30,450.44 372.30,450.44 372.30,439.34 C372.30,428.23 372.30,428.23 410.60,428.23"/>
<path class="ar" d="M410.60,156.00 L422.40,161.20 L410.60,166.40 Z"/>
<path class="ar" d="M410.60,183.00 L422.40,188.20 L410.60,193.40 Z"/>
<path class="ar" d="M410.60,196.34 L422.40,201.54 L410.60,206.74 Z"/>
<path class="ar" d="M410.60,209.67 L422.40,214.87 L410.60,220.07 Z"/>
<path class="ar" d="M410.60,223.01 L422.40,228.21 L410.60,233.41 Z"/>
<path class="ar" d="M410.60,236.34 L422.40,241.54 L410.60,246.74 Z"/>
<path class="ar" d="M410.60,249.68 L422.40,254.88 L410.60,260.08 Z"/>
<path class="ar" d="M410.60,263.01 L422.40,268.21 L410.60,273.41 Z"/>
<path class="ar" d="M410.60,276.35 L422.40,281.55 L410.60,286.75 Z"/>
<path class="ar" d="M410.60,289.68 L422.40,294.88 L410.60,300.08 Z"/>
<path class="ar" d="M410.60,303.02 L422.40,308.22 L410.60,313.42 Z"/>
<path class="ar" d="M410.60,316.35 L422.40,321.55 L410.60,326.75 Z"/>
<path class="ar" d="M410.60,329.69 L422.40,334.89 L410.60,340.09 Z"/>
<path class="ar" d="M410.60,169.67 L422.40,174.87 L410.60,180.07 Z"/>
<path class="ar" d="M410.60,356.36 L422.40,361.56 L410.60,366.76 Z"/>
<path class="ar" d="M410.60,369.69 L422.40,374.89 L410.60,380.09 Z"/>
<path class="ar" d="M410.60,409.70 L422.40,414.90 L410.60,420.10 Z"/>
<path class="ar" d="M410.60,423.03 L422.40,428.23 L410.60,433.43 Z"/>
</svg>
<!-- right panel frame -->
<div class="abs" style="left:716px;top:113px;width:370px;height:2px;background:#72849b"></div>
<div class="abs" style="left:716px;top:113px;width:2px;height:619px;background:#72849b"></div>
<div class="abs" style="left:718px;top:731px;width:367px;height:1px;background:#72849b"></div>
<div class="abs" style="left:716px;top:732px;width:370px;height:2px;background:#fcfcfc"></div>
<div class="abs" style="left:1084px;top:115px;width:1px;height:617px;background:#72849b"></div>
<div class="abs" style="left:1085px;top:113px;width:1px;height:621px;background:#fcfcfc"></div>
<div class="abs" style="left:736px;top:133.5px;font-weight:bold;font-size:12px;line-height:14px;color:#2a2a2a;white-space:nowrap;letter-spacing:-.13px">Source mapping details:</div>
<div class="abs" style="left:735px;top:148px;width:332px;height:1px;background:#707070"></div>
<div class="lbl" style="top:159px;letter-spacing:0px">Name:</div>
<div class="inp" style="top:155px;height:19px;border-color:#62768b #7d8fa2 #7d8fa2 #62768b;color:#222;letter-spacing:.19px;padding-top:2.4px;padding-left:1.5px">l_customer_orders.hk_hub_employee</div>
<div class="lbl" style="top:185px;letter-spacing:-0.35px">Model:</div>
<div class="inp" style="top:181px;letter-spacing:.05px">Data vault: Sale Analysis System - 1</div>
<div class="lbl" style="top:211px;letter-spacing:0.09px">Database:</div>
<div class="inp" style="top:207px"></div>
<div class="lbl" style="top:237px;letter-spacing:-0.18px">Schema:</div>
<div class="inp" style="top:233px"></div>
<div class="lbl" style="top:263px;letter-spacing:-0.07px">Table:</div>
<div class="inp" style="top:259px;letter-spacing:.1px">l_customer_orders</div>
<div class="lbl" style="top:289px;letter-spacing:-0.23px">Column:</div>
<div class="inp" style="top:285px;letter-spacing:.15px">hk_hub_employee</div>
<div class="lbl" style="top:315px;letter-spacing:-0.2px">Label:</div>
<div class="inp" style="top:311px;letter-spacing:.15px">hk_hub_employee</div>
<div class="lbl" style="top:341px;letter-spacing:-0.15px">Source description:</div>
<div class="inp" style="top:337px;height:19px;border-color:#666 #9a9a9a #9a9a9a #666"></div>
<div class="lbl" style="top:367px;letter-spacing:-0.15px">Business definition:</div>
<div class="inp" style="top:363px;height:19px;border-color:#666 #9a9a9a #9a9a9a #666"></div>
<div class="abs" style="left:736px;top:460.5px;font-weight:bold;font-size:12px;line-height:14px;color:#2a2a2a;white-space:nowrap;letter-spacing:-.145px">Source mapping ordering:</div>
<div class="abs" style="left:735px;top:475px;width:332px;height:1px;background:#707070"></div>
<svg class="abs" style="left:737px;top:482px" width="44" height="16" viewBox="0 0 44 16">
<path d="M8.2,1 L14.8,7.8 H10.7 V14.6 H5.7 V7.8 H1.6 Z" fill="#cccccc"/>
<path d="M34.4,15 L41,8.2 H36.9 V1.4 H31.9 V8.2 H27.8 Z" fill="#cccccc"/>
</svg>
<div class="abs" style="left:787px;top:483.8px;font-weight:bold;font-size:12px;line-height:14px;color:#2a2a2a;white-space:nowrap;letter-spacing:.03px">l_customer_orders.hk_hub_employee (Selected)</div>
<div class="btn" style="left:847px;width:75px;border:2px solid #6f839b;padding-top:5px"><u>O</u>K</div>
<div class="btn" style="left:926px;width:75px"><u>C</u>ancel</div>
<div class="btn" style="left:1005px;width:75px"><u>A</u>pply</div>

</body></html>
